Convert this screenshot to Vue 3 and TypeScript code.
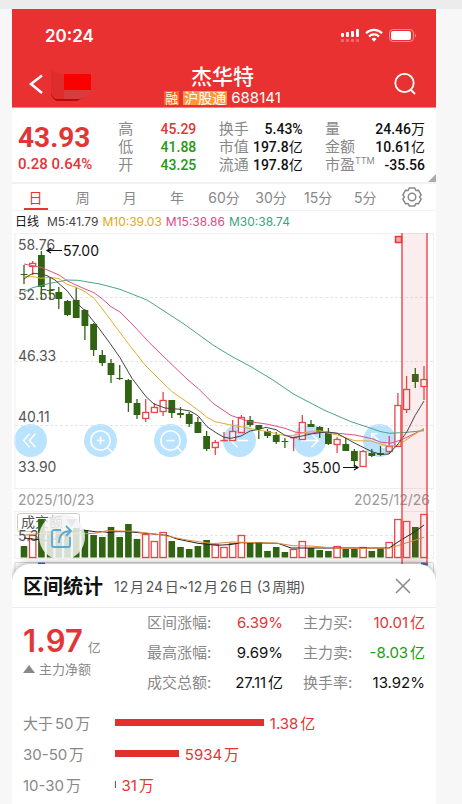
<script setup lang="ts">
import { ref } from 'vue'

type Candle = [up: 0 | 1, high: number, top: number, bottom: number, low: number, volume: number]

// Each entry: rising flag, wick top, body top, body bottom, wick bottom, volume bar top.
const candles: Candle[] = [
  [0, 265, 274, 275, 284, 546], [1, 261, 263, 267, 275, 535], [0, 251, 255, 287, 300, 519],
  [0, 278, 290, 291, 300, 531], [0, 287, 292, 299, 309, 530], [0, 300, 301, 315, 316, 532],
  [0, 287, 300, 318, 318, 528], [0, 309, 310, 326, 340, 530], [0, 323, 324, 350, 356, 535],
  [0, 350, 355, 363, 366, 537], [0, 359, 363, 375, 383, 527], [0, 365, 378, 379, 380, 537],
  [0, 379, 380, 403, 412, 524], [0, 399, 403, 415, 419, 539], [1, 399, 412, 419, 422, 534],
  [1, 403, 407, 413, 413, 541], [1, 392, 400, 412, 416, 532], [0, 400, 400, 413, 418, 541],
  [0, 407, 413, 415, 418, 547], [0, 412, 414, 424, 427, 549], [0, 417, 422, 433, 433, 546],
  [0, 431, 436, 449, 451, 540], [1, 440, 442, 448, 455, 544], [1, 432, 440, 441, 441, 547],
  [1, 420, 431, 441, 441, 543], [1, 415, 417, 433, 433, 535], [0, 416, 420, 425, 427, 543],
  [0, 425, 425, 429, 439, 542], [0, 429, 431, 436, 438, 551], [0, 432, 435, 442, 444, 547],
  [0, 438, 441, 442, 448, 552], [1, 437, 437, 438, 451, 549], [1, 415, 422, 440, 440, 541],
  [0, 420, 424, 427, 427, 548], [0, 426, 427, 432, 438, 550], [0, 428, 432, 444, 445, 551],
  [1, 437, 439, 445, 453, 546], [0, 438, 444, 451, 451, 549], [0, 449, 451, 461, 467, 549],
  [1, 450, 451, 467, 467, 547], [0, 449, 453, 456, 457, 551], [0, 446, 453, 455, 456, 548],
  [1, 436, 446, 452, 454, 542], [1, 393, 405, 447, 447, 519], [1, 376, 389, 410, 413, 521],
  [0, 368, 374, 382, 388, 527], [1, 366, 379, 387, 400, 514],
]
const STEP = 8.696
const bars = candles.map(([up, high, top, bottom, low, volume], i) => ({
  i, up: up === 1, high, top, bottom, low, volume, x: Math.round((24 + i * STEP) * 10) / 10,
}))

const averages = [
  { name: 'ma30', points: '24,291.7 32.7,287.7 50,283.3 67,280 78,280.3 100,284 120,289.3 147,300 183,323.3 213,345 231,356 251,366.7 273,380 294,394.3 324,410 351,421.7 371,428.3 381,431.7 390,433.3 404,432.5 424,430.7' },
  { name: 'ma15', points: '24,264 41,267.3 59,275 67,280.7 76,285 85,289 94,292.7 102,298.7 111,306.7 120,312 133,325 150,343.3 170,362.7 188,380 198,388.3 213,403.3 231,415.5 250,421.7 268,424.3 285,428.3 296,432.3 311,433.3 320,431.7 328,432.3 355,435 372,438.7 381,442.3 391,443 401,440 424,429' },
  { name: 'ma10', points: '24,276.7 33,276.7 41,278.3 50,277.3 59,278.7 67,284.3 76,287.3 85,291.7 94,298.3 107,315 128,343.3 145,365 160,380 172,391.7 187,402 197,409.3 207,417.3 215,421.7 231,425 241,426.7 251,428.7 268,431.7 285,435.7 293,435.3 302,433.3 311,431.3 320,430.7 328,433 337,435 355,440.7 371,441 381,444.3 389,446 398,445.3 411,436.7 424,428.3' },
  { name: 'ma5', points: '24,279 28,276 33,273.3 38,273.7 47,275.7 55,280 67,290.7 76,302.3 85,310.7 97,325.7 110,343.3 120,357.7 132,378.3 146,396.7 154,404 165,408 180,409.3 190,411 198,415.7 207,426.7 217,433.3 224,437.3 231,438.3 241,436 250,431 259,429.3 266,427.3 276,429.7 285,435.3 293,437.7 302,436 311,434 320,432.7 328,432 337,433.3 346,438.3 355,443.3 363,447.3 372,451.7 381,454.3 389,454 398,444 407,431.7 415,415.7 424,401' },
]

const axis = [
  { y: 250, t: '58.76' }, { y: 300, t: '52.55' }, { y: 361, t: '46.33' }, { y: 422, t: '40.11' }, { y: 472, t: '33.90' },
]

const periods = ['日', '周', '月', '年', '60分', '30分', '15分', '5分']
const active = ref(0)

const quotes = [
  { cls: 'c1', rows: [['高', '', '45.29', '', 'up'], ['低', '', '41.88', '', 'down'], ['开', '', '43.25', '', 'down']] },
  { cls: 'c2', rows: [['换手', '', '5.43%', '', ''], ['市值', '', '197.8', '亿', ''], ['流通', '', '197.8', '亿', '']] },
  { cls: 'c3', rows: [['量', '', '24.46', '万', ''], ['金额', '', '10.61', '亿', ''], ['市盈', 'TTM', '-35.56', '', '']] },
]

const stats = [
  ['区间涨幅:', '6.39%', 'up', '主力买:', '10.01亿', 'up'],
  ['最高涨幅:', '9.69%', '', '主力卖:', '-8.03亿', 'down'],
  ['成交总额:', '27.11亿', '', '换手率:', '13.92%', ''],
]

const orders = [
  { label: '大于50万', width: 48, text: '1.38亿' },
  { label: '30-50万', width: 20.6, text: '5934万' },
  { label: '10-30万', width: 0.2, text: '31万' },
]

const tools = [
  { name: '向前翻页', d: 'M16 10l-6 7 6 7M22 10l-6 7 6 7' },
  { name: '放大', d: 'M17 7a10 10 0 1 0 0 20a10 10 0 1 0 0-20M24 24l5 5M17 13v8M13 17h8' },
  { name: '缩小', d: 'M17 7a10 10 0 1 0 0 20a10 10 0 1 0 0-20M24 24l5 5M13 17h8' },
  { name: '左移', d: 'M26 17H8M15 10l-7 7 7 7' },
  { name: '右移', d: 'M8 17h18M19 10l7 7-7 7' },
  { name: '全屏', d: 'M9 16V10h6M9 10l7 7M25 18v6h-6' },
]

// Six-toothed cog outline around the origin.
const cog = 'M' + Array.from({ length: 6 }, (_, k) =>
  [[-30, 7.6], [-17, 9.4], [17, 9.4], [30, 7.6]].map(([a, r]) => {
    const t = ((k * 60 + a - 90) * Math.PI) / 180
    return `${(r * Math.cos(t)).toFixed(2)} ${(r * Math.sin(t)).toFixed(2)}`
  }).join('L')).join('L') + 'Z'
</script>

<template>
  <main class="phone">
    <header class="top">
      <div class="status">
        <span class="clock">20:24</span>
        <svg class="signals" width="78" height="16" viewBox="0 0 78 16" aria-hidden="true">
          <g fill="#fff">
            <rect x="2" y="5" width="3" height="4" rx="1" /><rect x="7" y="4" width="3" height="5" rx="1" />
            <rect x="12" y="3" width="3" height="6" rx="1" /><rect x="17" y="1" width="3" height="8" rx="1" />
            <g opacity=".3">
              <rect x="2" y="11" width="3" height="3" rx="1" /><rect x="7" y="11" width="3" height="3" rx="1" />
              <rect x="12" y="11" width="3" height="3" rx="1" /><rect x="17" y="11" width="3" height="3" rx="1" />
            </g>
            <path d="M32.500 11a3.600 3.600 0 0 1 5 0L35 13.800z" />
          </g>
          <g fill="none" stroke="#fff" stroke-width="2.200">
            <path d="M27 5.200a11.500 11.500 0 0 1 16 0" /><path d="M30 8.500a7 7 0 0 1 10 0" />
          </g>
          <rect x="50.500" y="1.500" width="24" height="12" rx="3.500" fill="none" stroke="#fff" stroke-opacity=".45" />
          <rect x="52" y="3" width="20" height="9" rx="2" fill="#fff" />
          <path d="M76 5.500a2.500 2.500 0 0 1 0 4z" fill="#fff" opacity=".5" />
        </svg>
      </div>
      <div class="nav">
        <div class="side">
          <button class="icon" aria-label="返回">
            <svg width="18" height="22" viewBox="0 0 18 22"><path d="M14 2.500L3 11l11 9" fill="none" stroke="#fff" stroke-width="2.500" /></svg>
          </button>
          <svg class="patch" width="44" height="36" viewBox="0 0 44 36" aria-hidden="true">
            <path d="M1 2c2 5 6 7 13 7h27v18l-6 4H1z" fill="#e02c2c" />
            <path d="M1 27c0 5 3 8 6 9h20l7-4-10-3z" fill="#b80a0a" />
            <path d="M1 9h13v25H6c-3-1-5-4-5-8z" fill="#df2c2d" />
            <rect x="14" y="9" width="27" height="16" fill="#fa0000" />
            <path d="M14 25h27v4l-6 3-5 2H14z" fill="#d83c3e" />
          </svg>
        </div>
        <div class="name">
          <h1>杰华特</h1>
          <p><span class="tag deep">融</span><span class="tag">沪股通</span><span class="code">688141</span></p>
        </div>
        <div class="side end">
          <button class="icon" aria-label="搜索">
            <svg width="24" height="24" viewBox="0 0 24 24" fill="none" stroke="#fff" stroke-width="1.800">
              <circle cx="11.500" cy="11" r="9.200" /><path d="M17.500 17.500l4.500 4.500" />
            </svg>
          </button>
        </div>
      </div>
    </header>

    <section class="quote">
      <div class="price"><strong>43.93</strong><span>0.28 0.64%</span></div>
      <dl v-for="q in quotes" :key="q.cls" :class="q.cls">
        <div v-for="r in q.rows" :key="r[0]">
          <dt>{{ r[0] }}<sup v-if="r[1]">{{ r[1] }}</sup></dt>
          <dd :class="r[4]">{{ r[2] }}<i v-if="r[3]">{{ r[3] }}</i></dd>
        </div>
      </dl>
      <span class="corner"></span>
    </section>

    <nav class="tabs">
      <button v-for="(p, i) in periods" :key="p" :class="{ on: active === i }" @click="active = i">{{ p }}</button>
      <button aria-label="设置">
        <svg width="22" height="22" viewBox="-11 -11 22 22" fill="none" stroke="#888" stroke-width="1.500" stroke-linejoin="round">
          <path :d="cog" /><circle r="3.800" />
        </svg>
      </button>
    </nav>

    <p class="legend">
      <span class="kind">日线</span><span>M5:41.79</span><span class="y">M10:39.03</span><span class="p">M15:38.86</span><span class="g">M30:38.74</span>
    </p>

    <section class="chart">
      <div class="tools">
        <button v-for="t in tools" :key="t.name" :aria-label="t.name">
          <svg width="33" height="33" viewBox="0 0 34 34"><path :d="t.d" fill="none" stroke="#fff" stroke-width="1.600" /></svg>
        </button>
      </div>
      <svg class="plot" viewBox="12 232 424 356" role="img" aria-label="日线走势">
        <g fill="none" stroke="#efeff0">
          <rect x="15" y="233.500" width="418.500" height="255" />
          <rect x="15" y="511.500" width="418.500" height="47" />
          <path d="M15 562.500H433.500V588M15 562.500V588" stroke="#ddd" />
          <path d="M15 297.500H433M15 361.500H433M15 425.500H433M15 535.500H433" stroke="#e6e6e6" stroke-dasharray="3 2" />
        </g>
        <g class="axis">
          <text v-for="a in axis" :key="a.t" x="18" :y="a.y">{{ a.t }}</text>
        </g>
        <g class="date">
          <text x="18" y="505">2025/10/23</text>
          <text x="430" y="505" text-anchor="end">2025/12/26</text>
        </g>
        <rect x="17.500" y="513.500" width="62" height="18" rx="2" fill="#fff" fill-opacity=".7" stroke="#ccc" />
        <text class="vol" x="21" y="527">成交额</text>
        <path d="M66 519h11l-5.500 8z" fill="#aaa" />

        <g v-for="b in bars" :key="b.i" :class="b.up ? 'rise' : 'fall'">
          <path :d="`M${b.x} ${b.high}V${b.top}M${b.x} ${b.bottom}V${b.low}`" />
          <rect v-if="b.up" :x="b.x - 3" :y="b.top + 0.5" width="6" :height="Math.max(b.bottom - b.top - 1, 0.2)" />
          <rect v-else :x="b.x - 3.4" :y="b.top" width="6.800" :height="b.bottom - b.top" />
          <rect v-if="b.up" :x="b.x - 3.2" :y="b.volume + 0.5" width="6.400" :height="557 - b.volume" />
          <rect v-else :x="b.x - 3.3" :y="b.volume" width="6.600" :height="557.5 - b.volume" />
        </g>
        <g class="axis"><text x="18" y="541">5.32</text></g>

        <g class="lines">
          <polyline v-for="m in averages" :key="m.name" :class="m.name" :points="m.points" />
          <polyline class="v5" points="24,538 50,541 70,532 83,530 97,532 103,531.700 110,532.700 115,531.700 128,531.700 143,533 160,534.700 167,535.300 177,539 198,543.300 217,545.300 231,544.500 241,542.700 278,543.300 291,548 338,548 389,548 401,540 415,531.700 424,525" />
          <polyline class="v10" points="25,535 43,533.300 80,534 95,533.300 107,530.700 133,531.300 160,534.700 187,540 213,543.700 231,542 278,543.300 293,545.700 311,546 337,548.300 389,548.300 407,542.700 424,537.300" />
        </g>

        <g class="mark" fill="none" stroke="#111" stroke-width="1.200">
          <path d="M62 250.500H47M51 248l-4 2.500 4 2.500" /><path d="M343 467.500H358M354 465l4 2.500-4 2.500" />
        </g>
        <text class="note" x="63" y="255.500">57.00</text>
        <text class="note" x="340.500" y="472.500" text-anchor="end">35.00</text>

        <path d="M38 564h7M421 564h7" stroke="#3f73c8" stroke-width="3" />
        <rect x="402" y="233" width="25" height="331" fill="#d85050" fill-opacity=".1" />
        <path d="M402 233V564M427 233V564" stroke="#e8484a" stroke-width="1.400" />
        <rect x="395.500" y="236.500" width="6" height="6" fill="#f3a6a6" stroke="#e5393b" stroke-width="1.500" />
      </svg>
      <button class="share" aria-label="分享">
        <svg width="24" height="24" viewBox="0 0 24 24" fill="none" stroke="#5aaad4" stroke-width="1.800">
          <path d="M11 5H4a2 2 0 0 0-2 2v13a2 2 0 0 0 2 2h14a2 2 0 0 0 2-2v-8" />
          <path d="M9 18c0-8 4-12 12-12M16 1l5 5-5 5" />
        </svg>
      </button>
    </section>

    <section class="sheet">
      <header>
        <h2>区间统计</h2>
        <span>12月24日~12月26日 (3周期)</span>
        <button class="icon" aria-label="关闭">
          <svg width="18" height="18" viewBox="0 0 18 18"><path d="M2 2l14 14M16 2L2 16" stroke="#888" stroke-width="1.500" /></svg>
        </button>
      </header>
      <div class="summary">
        <div class="net">
          <p class="big"><strong>1.97</strong><span>亿</span></p>
          <p class="cap"><i></i>主力净额</p>
        </div>
        <div class="grid">
          <template v-for="s in stats" :key="s[0]">
            <span>{{ s[0] }}</span><b :class="s[2]">{{ s[1] }}</b>
            <span class="second">{{ s[3] }}</span><b :class="s[5]">{{ s[4] }}</b>
          </template>
        </div>
      </div>
      <ul class="orders">
        <li v-for="o in orders" :key="o.label">
          <span class="label">{{ o.label }}</span>
          <div class="track"><span class="bar" :style="{ width: o.width + '%' }"></span><span class="up">{{ o.text }}</span></div>
        </li>
      </ul>
    </section>
  </main>
</template>

<style>
body { background: #f7f7f7; }
#app {
  display: flex;
  box-sizing: border-box;
  min-height: 100vh;
  border-top: 9px solid #ececec;
  padding: 0 26px 0 12px;
}
</style>

<style scoped>
.phone {
  display: flex;
  flex: 1;
  flex-direction: column;
  min-width: 0;
  background: #fff;
  color: #111;
  font-family: Inter, "Noto Sans CJK SC", sans-serif;
  font-size: 14px;
}
h1, h2, p, dl, dd, ul { margin: 0; padding: 0; }
i { font-style: normal; }
button { padding: 0; border: 0; background: none; color: inherit; font: inherit; cursor: pointer; }
svg { display: block; }
.up { color: #e23535; }
.down { color: #229a12; }

.top { background: #e93131; color: #fff; border-bottom: 1px solid #f08a8a; }
.status { display: flex; justify-content: space-between; align-items: center; height: 53px; padding: 0 19px 0 33px; }
.clock { font-size: 17px; font-weight: 600; }
.nav { display: flex; justify-content: space-between; height: 45px; }
.side { display: flex; flex: 1; align-items: flex-start; gap: 4px; padding: 3px 0 0 16px; }
.side .icon { margin-top: 8px; }
.side.end { justify-content: flex-end; padding: 0 19px 0 0; }
.side.end .icon { margin-top: 10px; }
.name { padding-top: 1px; text-align: center; }
.name h1 { font-size: 21px; font-weight: 500; line-height: 28px; }
.name p { display: flex; align-items: center; gap: 4px; line-height: 14px; }
.tag { padding: 0 1px; background: #ff973a; font-size: 14px; }
.tag.deep { background: #ff6410; font-size: 13px; }
.code { font-size: 15px; }

.quote {
  position: relative;
  display: flex;
  justify-content: space-between;
  height: 62px;
  padding: 12px 11px 0 6px;
  border-bottom: 2px solid #f2f2f2;
}
.price { display: flex; flex-direction: column; width: 78px; color: #e23535; font-family: Roboto, sans-serif; font-weight: 500; }
.price strong { font-size: 28px; font-weight: 700; line-height: 36px; }
.price span { font-size: 15px; line-height: 16px; white-space: nowrap; }
dl div { display: flex; justify-content: space-between; line-height: 18px; white-space: nowrap; }
dt { color: #888; font-size: 15px; }
dt sup { font-size: 9px; line-height: 1; vertical-align: 6px; }
dd { font: 500 14px/18px Roboto, "Noto Sans CJK SC", sans-serif; }
dd i { font-weight: 400; }
.c1 { width: 78px; }
.c2 { width: 84px; }
.c3 { width: 100px; }
.corner {
  position: absolute;
  right: 0;
  bottom: 0;
  border: 4px solid;
  border-color: transparent #aaa #aaa transparent;
}

.tabs { display: grid; grid-template-columns: repeat(9, 1fr); height: 26px; border-bottom: 1px solid #f2f2f2; color: #888; }
.tabs button { display: flex; justify-content: center; align-items: center; position: relative; }
.tabs .on { color: #e23535; }
.tabs .on::after { content: ""; position: absolute; bottom: 0; width: 24px; height: 2px; background: #e23535; }
.legend { display: flex; gap: 4px; padding-left: 3px; color: #444; font-size: 12px; line-height: 21px; white-space: nowrap; }
.kind { margin-right: 4px; color: #111; }
.y { color: #dcaa1c; }
.p { color: #dc4a84; }
.g { color: #3ea27e; }

.chart { position: relative; }
.tools { position: absolute; top: 192px; left: 2px; right: 40px; display: flex; justify-content: space-between; }
.tools button { border-radius: 50%; background: #b9e3ff; }
.plot { position: relative; width: 100%; height: auto; pointer-events: none; }
.axis, .note { font-size: 14px; }
.axis { fill: #555; }
.note { fill: #111; }
.date { fill: #999; font-size: 14px; }
.vol { fill: #555; font-size: 14px; }
.rise { fill: #fff; stroke: #ea4548; fill-opacity: 0.6; stroke-width: 1.3px; }
.fall path { stroke: #306413; stroke-width: 1.3px; }
.fall rect { fill: #306413; }
.lines polyline { fill: none; stroke-width: 1px; stroke-linejoin: round; }
.lines .ma5 { stroke: #444; }
.lines .ma10 { stroke: #e0b02c; }
.lines .ma15 { stroke: #de5288; }
.lines .ma30 { stroke: #4aa585; }
.lines .v5 { stroke: #222; }
.lines .v10 { stroke: #e08a3c; }
.share {
  position: absolute;
  top: 282px;
  left: 27px;
  display: grid;
  place-items: center;
  width: 46px;
  height: 46px;
  border-radius: 50%;
  background: rgba(245, 245, 245, 0.85);
}

.sheet {
  position: relative;
  flex: 1;
  margin-top: -24px;
  border-radius: 18px 18px 0 0;
  background: #fff;
  box-shadow: 0 -1px 6px rgba(0, 0, 0, 0.35);
  clip-path: inset(-12px 0 0 0);
  color: #888;
  font-size: 15px;
  text-autospace: normal;
}
.sheet header { display: flex; align-items: center; height: 43px; padding: 0 24px 0 11px; border-bottom: 1px solid #ebebf2; }
.sheet h2 { color: #111; font-size: 20px; font-weight: 700; }
.sheet header span { margin-left: 11px; color: #555; font-size: 14px; white-space: nowrap; }
.sheet header .icon { margin-left: auto; }
.summary { display: flex; padding: 0 11px 0 11px; }
.net { display: flex; flex-direction: column; gap: 4px; width: 124px; padding-top: 18px; }
.big { display: flex; align-items: baseline; gap: 5px; line-height: 30px; font-size: 13px; }
.big span { line-height: 16px; }
.big strong { color: #e23535; font-size: 31px; font-weight: 600; }
.cap { display: flex; align-items: center; gap: 4px; font-size: 13px; line-height: 18px; }
.cap i { border: 6px solid transparent; border-top: 0; border-bottom: 8px solid #888; }
.grid { display: grid; flex: 1; grid-template-columns: 66px 1fr 72px 70px; line-height: 30px; white-space: nowrap; }
.grid b { color: #111; font-weight: 400; text-align: right; }
.grid .up { color: #e23535; }
.grid .down { color: #229a12; }
.second { padding-left: 20px; }
.orders { padding: 9px 11px 0 11px; list-style: none; }
.orders li { display: flex; align-items: center; height: 31px; white-space: nowrap; }
.label { width: 92px; }
.track { display: flex; flex: 1; align-items: center; gap: 6px; }
.bar { height: 7px; background: #e23030; }
</style>
